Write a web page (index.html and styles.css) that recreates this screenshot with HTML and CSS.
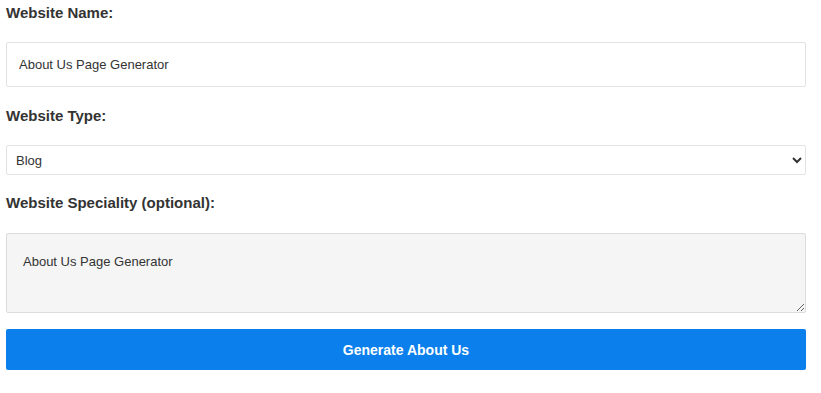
FILE: index.html
```html
<!DOCTYPE html>
<html lang="en">
<head>
    <meta charset="utf-8">
    <link rel="stylesheet" href="styles.css">
</head>
<body>
    <!-- About Us generator form -->
    <form class="about-form">
        <label for="site-name" class="field-label">Website Name:</label>
        <input type="text" id="site-name" class="text-field" value="About Us Page Generator">

        <label for="site-type" class="field-label">Website Type:</label>
        <select id="site-type" class="select-field">
            <option selected>Blog</option>
            <option>Business</option>
            <option>Portfolio</option>
            <option>E-commerce</option>
        </select>

        <label for="site-special" class="field-label">Website Speciality (optional):</label>
        <textarea id="site-special" class="area-field">About Us Page Generator</textarea>

        <button type="button" class="submit-btn">Generate About Us</button>
    </form>
</body>
</html>
```

FILE: styles.css
```css
/* Basic reset */
* {
    box-sizing: border-box;
    font-family: 'Liberation Sans', Arial, sans-serif;
}

body {
    margin: 0;
    background: #ffffff;
    color: #333333;
}

.about-form {
    display: flex;
    flex-direction: column;
    width: 800px;
    margin-left: 6px;
    padding-top: 4px;
}

.field-label {
    font-size: 15px;
    font-weight: bold;
    line-height: 17px;
    color: #333333;
    margin-bottom: 21px;
}

.text-field {
    height: 45px;
    padding: 0 12px;
    border: 1px solid #e2e2e2;
    border-radius: 2px;
    font-size: 13px;
    color: #333333;
    margin: 0 0 20px;
}

.select-field {
    height: 30px;
    padding: 0 5px;
    border: 1px solid #e2e2e2;
    border-radius: 2px;
    background: #ffffff;
    font-size: 13px;
    color: #333333;
    margin: 0 0 19px;
}

.area-field {
    height: 80px;
    padding: 20px 16px;
    border: 1px solid #dcdcdc;
    border-radius: 2px;
    background: #f5f5f5;
    font-size: 13px;
    color: #333333;
    margin: 1px 0 16px;
}

.submit-btn {
    height: 41px;
    border: none;
    border-radius: 2px;
    background: #0b80ec;
    color: #ffffff;
    font-size: 14px;
    font-weight: bold;
    cursor: pointer;
}
```
